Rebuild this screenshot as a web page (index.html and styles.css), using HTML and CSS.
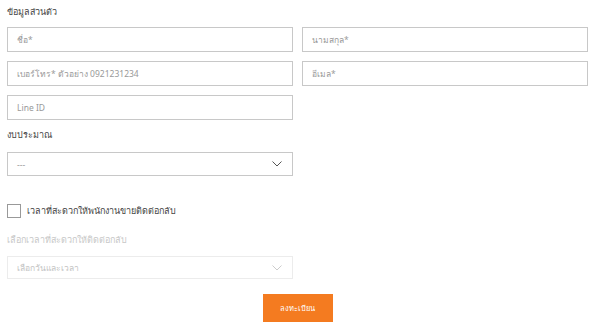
FILE: index.html
```html
<!DOCTYPE html>
<html lang="th">
<head>
<meta charset="utf-8">
<link rel="stylesheet" href="styles.css">
</head>
<body>
<form class="form">
  <div class="section-title">ข้อมูลส่วนตัว</div>
  <div class="grid">
    <div class="field"><span class="ph">ชื่อ*</span></div>
    <div class="field"><span class="ph">นามสกุล*</span></div>
    <div class="field"><span class="ph">เบอร์โทร* ตัวอย่าง 0921231234</span></div>
    <div class="field"><span class="ph">อีเมล*</span></div>
    <div class="field"><span class="ph">Line ID</span></div>
  </div>
  <div class="label">งบประมาณ</div>
  <div class="grid">
    <div class="field select"><span class="ph">---</span>
      <svg class="chev" width="12" height="8" viewBox="0 0 12 8"><path d="M1.5 1.5 L6 6 L10.5 1.5" fill="none" stroke="#555" stroke-width="1"/></svg>
    </div>
  </div>
  <label class="check"><span class="box"></span><span>เวลาที่สะดวกให้พนักงานขายติดต่อกลับ</span></label>
  <div class="label disabled">เลือกเวลาที่สะดวกให้ติดต่อกลับ</div>
  <div class="grid">
    <div class="field select dis"><span class="ph">เลือกวันและเวลา</span>
      <svg class="chev" width="12" height="8" viewBox="0 0 12 8"><path d="M1.5 1.5 L6 6 L10.5 1.5" fill="none" stroke="#ccc" stroke-width="1"/></svg>
    </div>
  </div>
  <div class="actions"><button type="button" class="btn">ลงทะเบียน</button></div>
</form>
</body>
</html>
```
FILE: styles.css
```css
html, body { margin: 0; padding: 0; background: #fff; }
body { font-family: "Noto Sans", "DejaVu Sans", sans-serif; color: #444; }
.form { width: 581px; padding: 5px 0 0 7px; }
.section-title { font-size: 9px; line-height: 14px; height: 14px; color: #444; }
.grid { display: grid; grid-template-columns: 286px 286px; column-gap: 9px; row-gap: 9px; margin-top: 8px; }
.field { height: 25px; box-sizing: border-box; border: 1px solid #c8c8c8; display: flex; align-items: center; padding: 0 9px; }
.ph { font-size: 8.5px; color: #999; }
.select { justify-content: space-between; height: 24px; }
.label { font-size: 9px; line-height: 14px; margin-top: 8px; color: #444; }
.label + .grid { margin-top: 10px; }
.check { display: flex; align-items: center; gap: 6px; margin-top: 28px; font-size: 9px; color: #444; }
.box { width: 12px; height: 12px; border: 1px solid #999; background: #fff; }
.disabled { color: #c8c8c8; margin-top: 15px; }
.disabled + .grid { margin-top: 9px; }
.dis { border-color: #ececec; height: 23px; }
.dis .ph { color: #c4c4c4; }
.actions { display: flex; justify-content: center; margin-top: 15px; }
.btn { width: 70px; height: 28px; border: none; background: #f47b20; color: #fff; font-family: inherit; font-size: 7.5px; padding: 0; }
```
